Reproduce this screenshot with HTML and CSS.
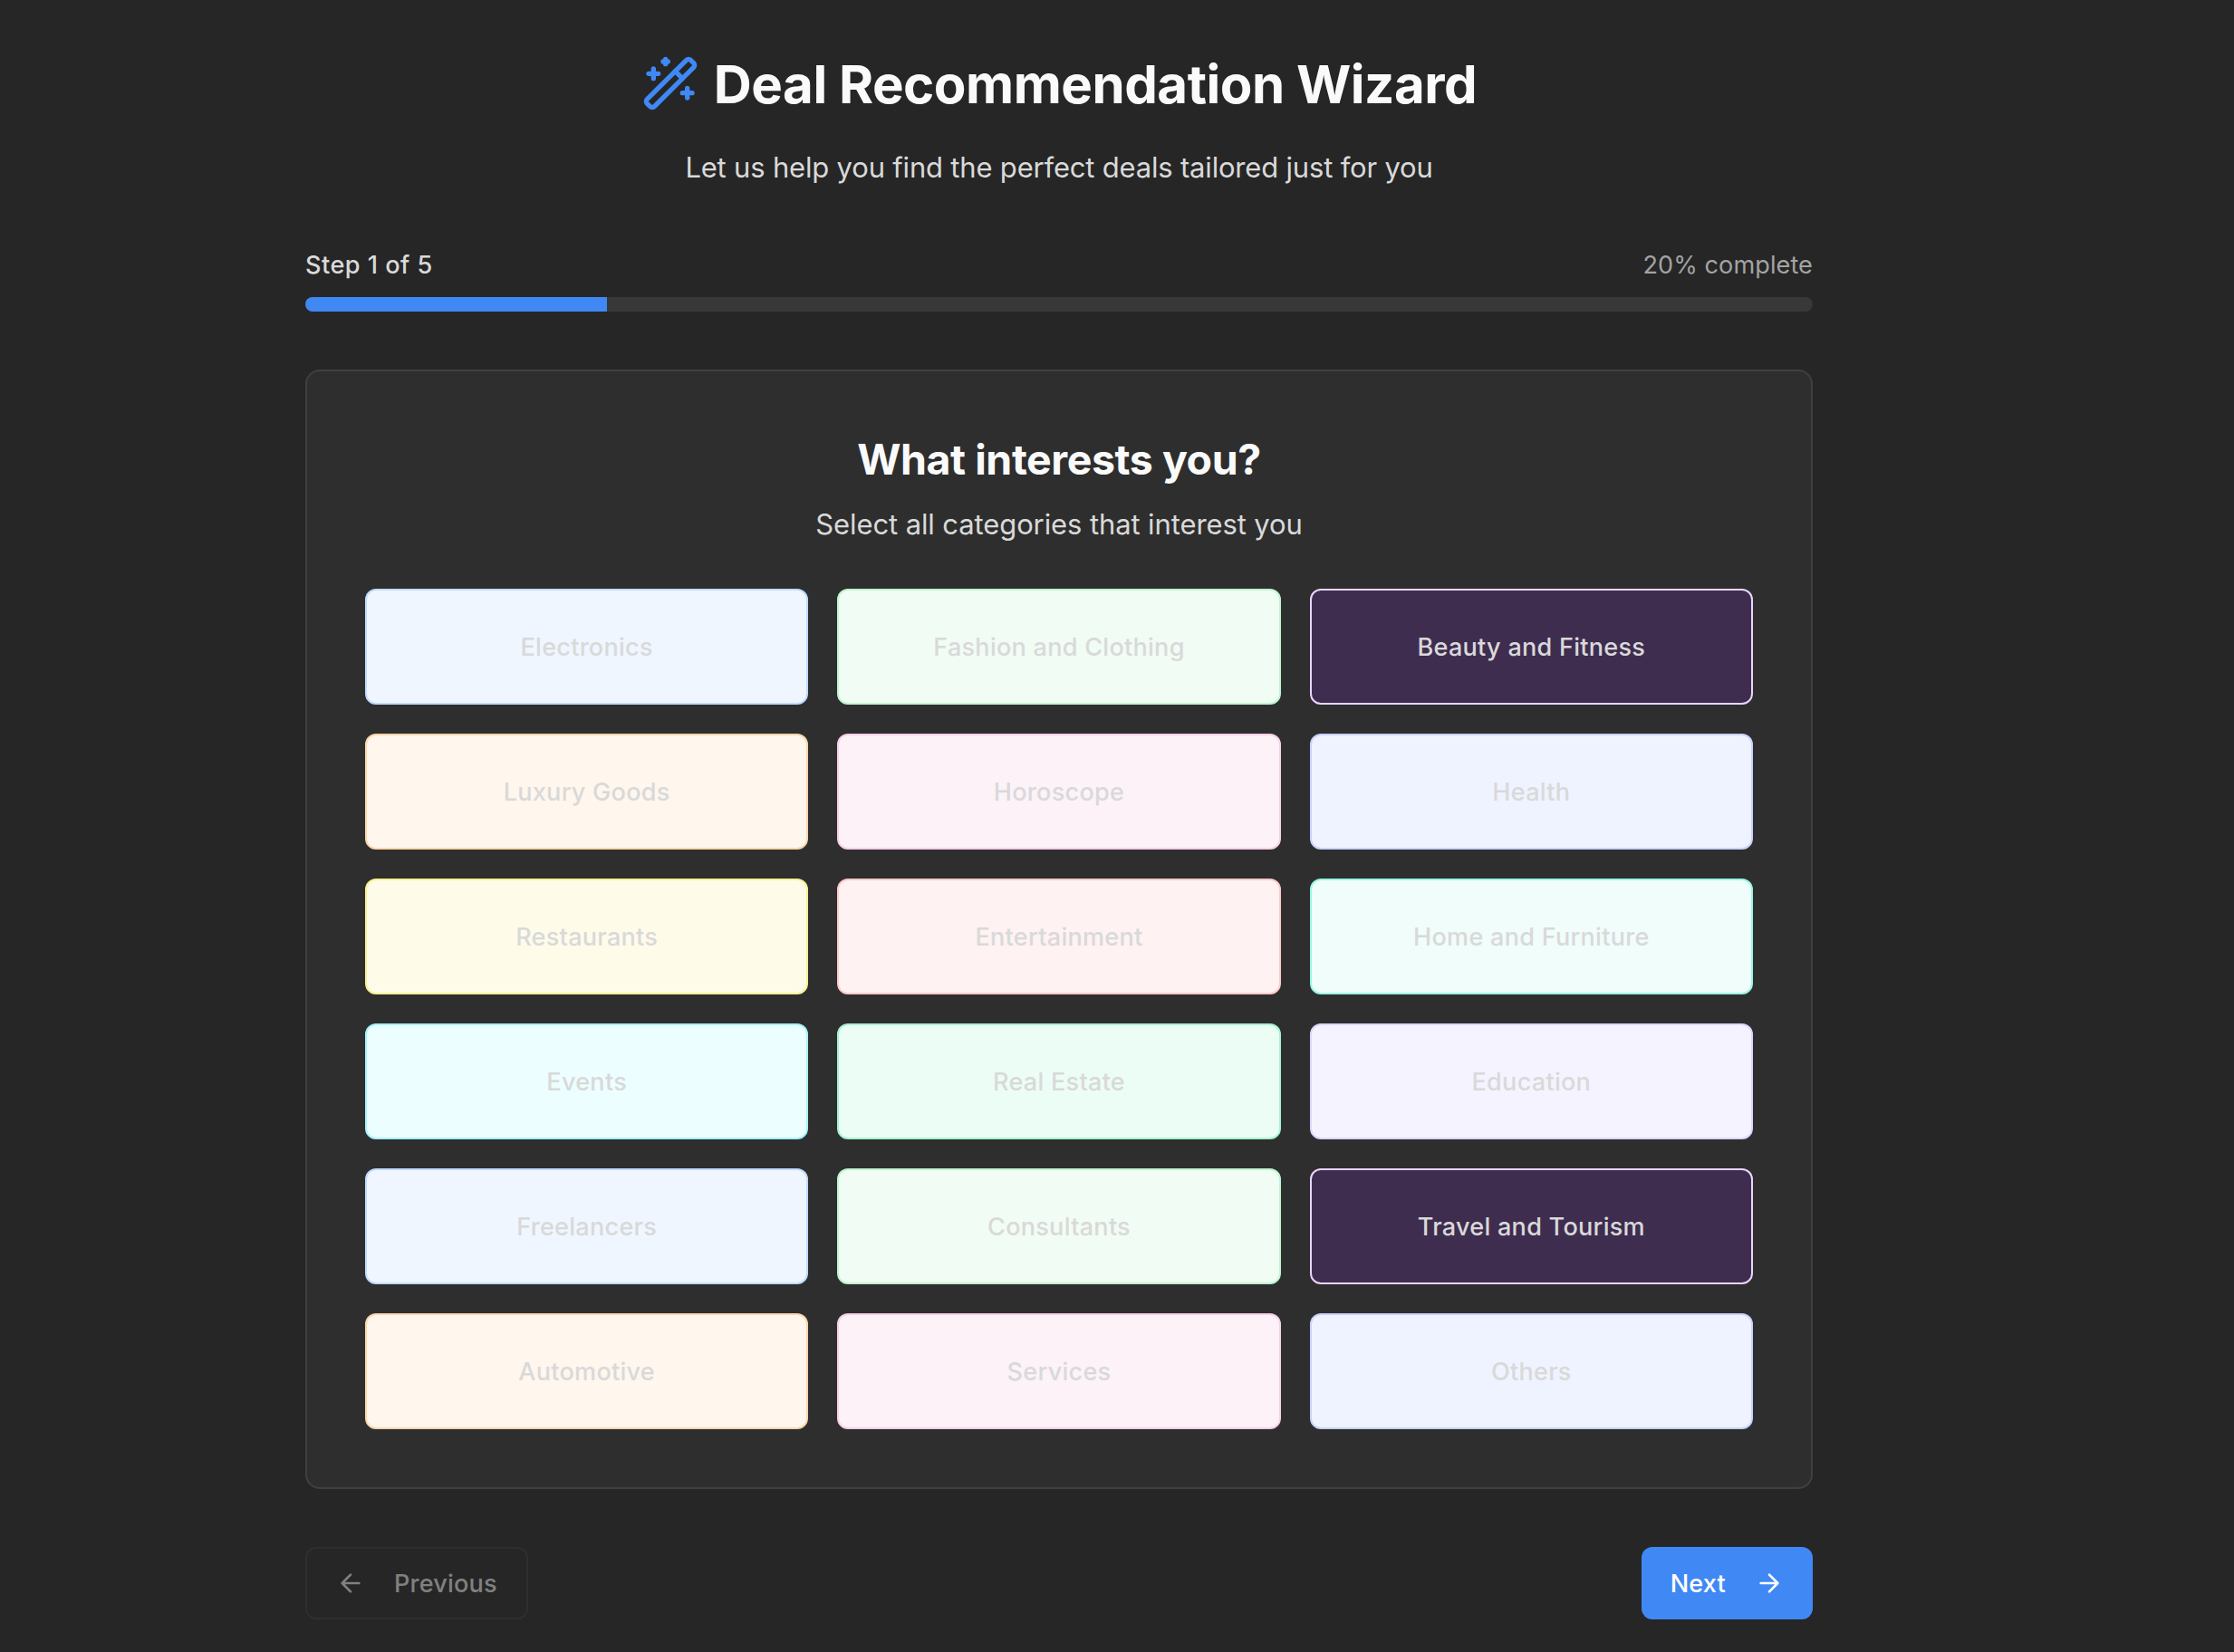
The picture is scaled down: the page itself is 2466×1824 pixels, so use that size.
FILE: index.html
```html
<!DOCTYPE html>
<html lang="en">
<head>
<meta charset="utf-8">
<title>Deal Recommendation Wizard</title>
<link rel="stylesheet" href="styles.css">
</head>
<body>
<main class="wizard">
  <header class="intro">
    <h1 class="title">
      <svg class="title-icon" viewBox="0 0 24 24"><path d="m21.64 3.64-1.28-1.28a1.21 1.21 0 0 0-1.72 0L2.36 18.64a1.21 1.21 0 0 0 0 1.72l1.28 1.28a1.2 1.2 0 0 0 1.72 0L21.64 5.36a1.2 1.2 0 0 0 0-1.72"/><path d="m14 7 3 3M5 6v4M19 14v4M10 2v2M7 8H3M21 16h-4M11 3H9"/></svg>
      <span class="title-text">Deal Recommendation Wizard</span>
    </h1>
    <p class="lead">Let us help you find the perfect deals tailored just for you</p>
  </header>

  <section class="progress">
    <div class="progress-labels">
      <span class="step">Step 1 of 5</span>
      <span class="percent">20% complete</span>
    </div>
    <div class="track"><div class="fill" style="width:20%"></div></div>
  </section>

  <section class="card">
    <h2 class="question">What interests you?</h2>
    <p class="hint">Select all categories that interest you</p>
    <div class="grid">
      <button class="tile blue">Electronics</button>
      <button class="tile green">Fashion and Clothing</button>
      <button class="tile selected">Beauty and Fitness</button>
      <button class="tile orange">Luxury Goods</button>
      <button class="tile pink">Horoscope</button>
      <button class="tile indigo">Health</button>
      <button class="tile yellow">Restaurants</button>
      <button class="tile red">Entertainment</button>
      <button class="tile teal">Home and Furniture</button>
      <button class="tile cyan">Events</button>
      <button class="tile emerald">Real Estate</button>
      <button class="tile violet">Education</button>
      <button class="tile blue">Freelancers</button>
      <button class="tile green">Consultants</button>
      <button class="tile selected">Travel and Tourism</button>
      <button class="tile orange">Automotive</button>
      <button class="tile pink">Services</button>
      <button class="tile indigo">Others</button>
    </div>
  </section>

  <nav class="actions">
    <button class="btn previous" disabled>
      <svg class="arrow" viewBox="0 0 24 24"><path d="m12 19-7-7 7-7M19 12H5"/></svg>
      <span>Previous</span>
    </button>
    <button class="btn next">
      <span>Next</span>
      <svg class="arrow" viewBox="0 0 24 24"><path d="M5 12h14M12 5l7 7-7 7"/></svg>
    </button>
  </nav>
</main>
</body>
</html>
```
FILE: styles.css
```css
* { box-sizing: border-box; margin: 0; }

body {
  min-height: 1824px;
  padding: 56px 128px 0 0;
  background: #262626;
  color: #d9d9d9;
  font-family: Inter, "Liberation Sans", sans-serif;
  overflow: hidden;
}

svg {
  fill: none;
  stroke: currentColor;
  stroke-width: 2;
  stroke-linecap: round;
  stroke-linejoin: round;
  flex: none;
}

button { font-family: inherit; }

.wizard {
  width: 1664px;
  margin: 0 auto;
  display: flex;
  flex-direction: column;
  gap: 64px;
}

.intro { text-align: center; }

.title {
  display: flex;
  align-items: center;
  justify-content: center;
  gap: 16px;
  height: 72px;
  margin-bottom: 33px;
  color: #fafafa;
  font-size: 58.2px;
  font-weight: 700;
  line-height: 70px;
  letter-spacing: -0.0085em;
}

.title-text { padding-top: 2px; }

.title-icon { width: 64px; height: 64px; color: #4088f4; }

.lead { font-size: 31px; line-height: 48px; letter-spacing: -0.0061em; }

.progress-labels {
  display: flex;
  justify-content: space-between;
  margin-bottom: 15px;
  font-size: 27.1px;
  line-height: 40px;
}

.step { font-weight: 500; letter-spacing: 0.0175em; }
.percent { color: #a3a3a3; letter-spacing: 0.0029em; }

.track { height: 16px; border-radius: 8px; background: #383838; overflow: hidden; }
.fill { height: 100%; background: #4088f4; }

.card {
  padding: 65px 64px 64px;
  border: 2px solid #404040;
  border-radius: 16px;
  background: #2e2e2e;
  text-align: center;
}

.question {
  margin-bottom: 16px;
  color: #fafafa;
  font-size: 46.5px;
  font-weight: 700;
  line-height: 64px;
  letter-spacing: -0.0095em;
}

.hint { margin-bottom: 47px; font-size: 31px; line-height: 48px; letter-spacing: -0.0035em; }

.grid { display: grid; grid-template-columns: repeat(3, 1fr); gap: 32px; }

.tile {
  height: 128px;
  border: 2px solid;
  border-radius: 12px;
  color: #d9d9d9;
  font-size: 27.1px;
  font-weight: 500;
  letter-spacing: 0.009em;
}

.blue { background: #eff6ff; border-color: #bfdbfe; }
.green { background: #f1fcf4; border-color: #bff5d0; }
.orange { background: #fff6ed; border-color: #fbd7ac; }
.pink { background: #fcf2f8; border-color: #f6d0e7; }
.indigo { background: #eff3ff; border-color: #c8d2fc; }
.yellow { background: #fefce9; border-color: #fbf093; }
.red { background: #fef2f2; border-color: #fecaca; }
.teal { background: #f0fdfa; border-color: #99f6e4; }
.cyan { background: #ecfeff; border-color: #a5f3fc; }
.emerald { background: #ecfdf5; border-color: #a7f3d0; }
.violet { background: #f5f3ff; border-color: #ddd6fe; }
.selected { background: #3f2d50; border-color: #e9d5ff; }

.actions { display: flex; justify-content: space-between; }

.btn {
  display: flex;
  align-items: center;
  gap: 32px;
  height: 80px;
  padding: 0 32px;
  border: 0;
  border-radius: 12px;
  font-size: 27.1px;
  font-weight: 500;
  letter-spacing: 0.006em;
}

.previous { border: 2px solid #383838; background: none; color: #d9d9d9; opacity: 0.5; }
.next { background: #4088f4; color: #fff; }

.arrow { width: 32px; height: 32px; }
```
